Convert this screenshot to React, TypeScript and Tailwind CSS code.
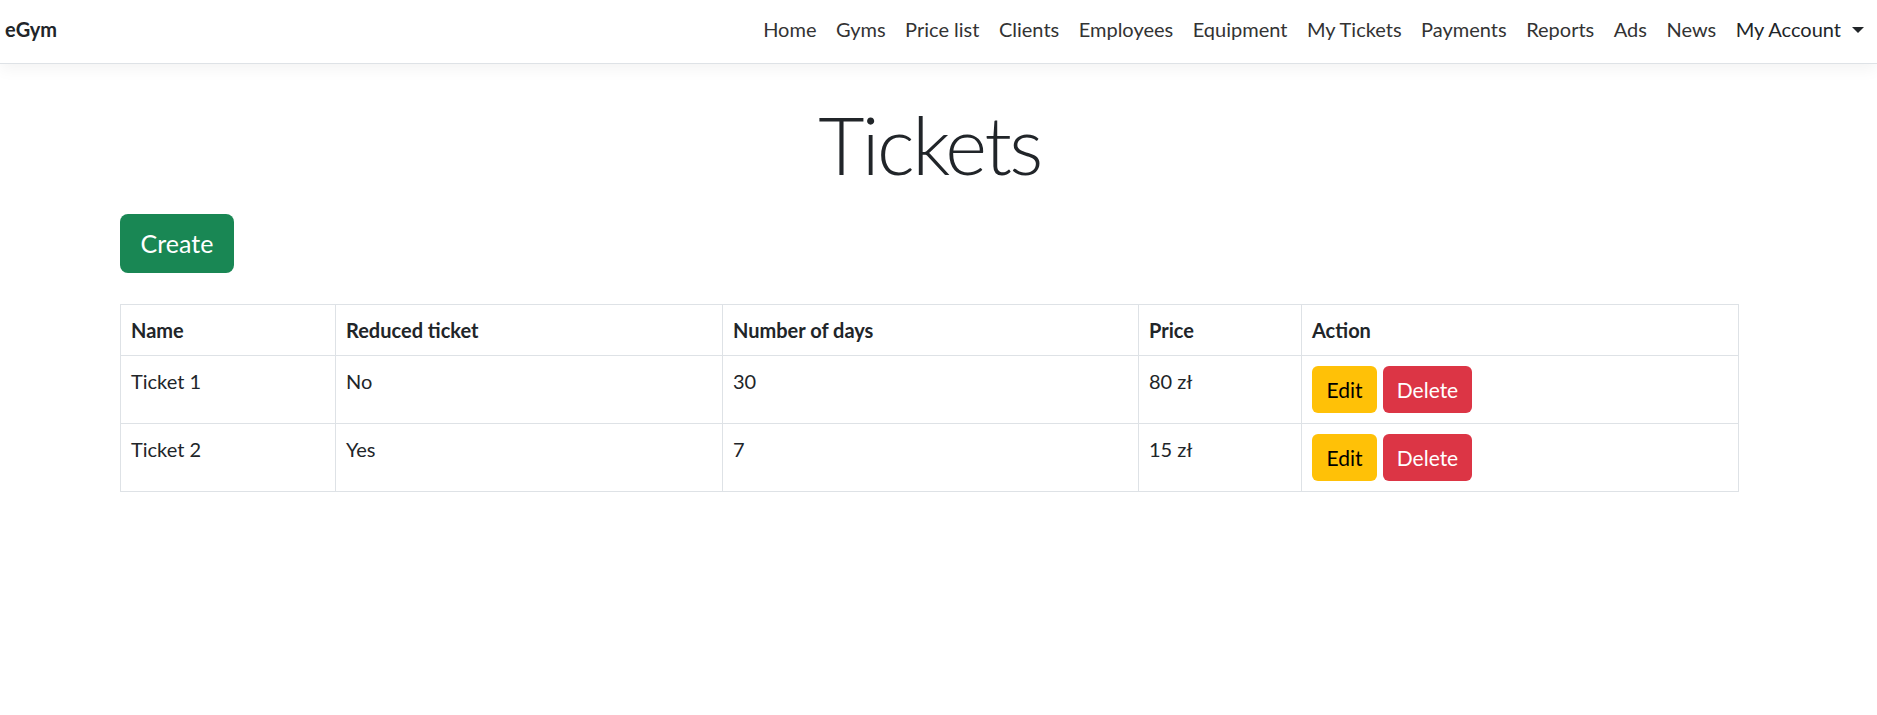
const links = ["Home", "Gyms", "Price list", "Clients", "Employees", "Equipment", "My Tickets", "Payments", "Reports", "Ads", "News"];

const tickets = [
  { name: "Ticket 1", reduced: "No", days: 30, price: "80 zł" },
  { name: "Ticket 2", reduced: "Yes", days: 7, price: "15 zł" },
];

export default function App() {
  return (
    <div className="min-h-screen bg-white font-['Lato',sans-serif] text-[20px] text-[#212529]">
      <nav className="flex h-[64px] items-center border-b border-[#dee2e6] bg-white pb-[5px] pl-[5px] pr-[6px] shadow-[0_5px_15px_rgba(0,0,0,0.05)]">
        <a className="text-[20px] leading-[30px] font-bold text-[#212529]">eGym</a>
        <ul className="ml-auto flex items-center">
          {links.map((l) => (
            <li key={l}>
              <a className="block px-[9.75px] leading-[30px] text-[#333]">{l}</a>
            </li>
          ))}
          <li>
            <a className="flex items-center pl-[9.75px] pr-[7px] leading-[30px] text-[#212529]">
              My Account
              <span className="ml-[11px] mt-[1px] h-0 w-0 border-x-[6px] border-t-[6px] border-x-transparent border-t-[#212529]" />
            </a>
          </li>
        </ul>
      </nav>

      <main className="ml-[120px] w-[1619px]">
        <h1 className="mt-[32px] text-center text-[80px] leading-[96px] font-light tracking-[-2.5px]">Tickets</h1>

        <button className="mt-[22px] flex h-[59px] w-[114px] items-center justify-center rounded-[8px] bg-[#198754] text-[25px] text-white">
          Create
        </button>

        <table className="mt-[31px] w-full table-fixed border-collapse border border-[#dee2e6]">
          <colgroup>
            <col className="w-[215px]" />
            <col className="w-[387px]" />
            <col className="w-[416px]" />
            <col className="w-[163px]" />
            <col />
          </colgroup>
          <thead>
            <tr className="border-b border-[#dee2e6] text-left">
              <th className="border-r border-[#dee2e6] p-[10px] leading-[30px] font-bold">Name</th>
              <th className="border-r border-[#dee2e6] p-[10px] leading-[30px] font-bold">Reduced ticket</th>
              <th className="border-r border-[#dee2e6] p-[10px] leading-[30px] font-bold">Number of days</th>
              <th className="border-r border-[#dee2e6] p-[10px] leading-[30px] font-bold">Price</th>
              <th className="p-[10px] leading-[30px] font-bold">Action</th>
            </tr>
          </thead>
          <tbody>
            {tickets.map((t) => (
              <tr key={t.name} className="border-b border-[#dee2e6] align-top">
                <td className="border-r border-[#dee2e6] p-[10px] leading-[30px]">{t.name}</td>
                <td className="border-r border-[#dee2e6] p-[10px] leading-[30px]">{t.reduced}</td>
                <td className="border-r border-[#dee2e6] p-[10px] leading-[30px]">{t.days}</td>
                <td className="border-r border-[#dee2e6] p-[10px] leading-[30px]">{t.price}</td>
                <td className="p-[10px]">
                  <div className="flex gap-[6px]">
                    <button className="flex h-[47px] w-[65px] items-center justify-center rounded-[6px] bg-[#ffc107] text-[21px] text-black">
                      Edit
                    </button>
                    <button className="flex h-[47px] w-[89px] items-center justify-center rounded-[6px] bg-[#dc3545] text-[21px] text-white">
                      Delete
                    </button>
                  </div>
                </td>
              </tr>
            ))}
          </tbody>
        </table>
      </main>
    </div>
  );
}
